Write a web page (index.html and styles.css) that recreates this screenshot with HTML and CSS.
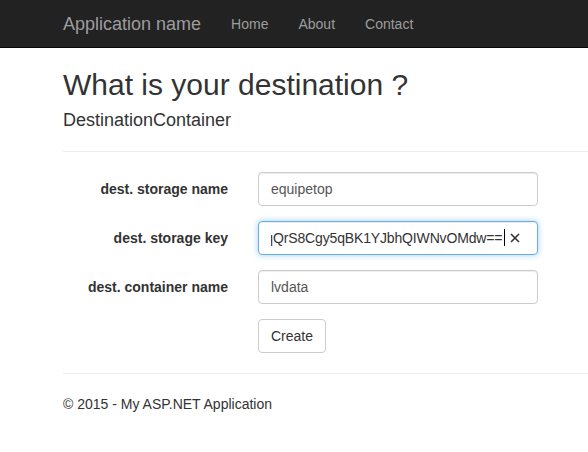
FILE: index.html
```html
<!DOCTYPE html>
<html>
<head>
<meta charset="utf-8">
<title>Create</title>
<link rel="stylesheet" href="styles.css">
</head>
<body>
<nav class="navbar">
  <div class="container nav-inner">
    <a class="brand" href="#">Application name</a>
    <ul class="nav">
      <li><a href="#">Home</a></li>
      <li><a href="#">About</a></li>
      <li><a href="#">Contact</a></li>
    </ul>
  </div>
</nav>
<main class="container">
  <h2 class="title">What is your destination ?</h2>
  <h4 class="subtitle">DestinationContainer</h4>
  <hr class="rule">
  <form class="form">
    <div class="form-group">
      <label class="control-label">dest. storage name</label>
      <input class="form-control" type="text" value="equipetop">
    </div>
    <div class="form-group">
      <label class="control-label">dest. storage key</label>
      <div class="form-control focused key-field">
        <span class="partial"><span>q</span></span>
        <span class="key-text">QrS8Cgy5qBK1YJbhQIWNvOMdw==</span>
        <span class="caret"></span>
        <svg class="clear" width="10" height="10" viewBox="0 0 10 10"><path d="M1 1L9 9M9 1L1 9" stroke="#333" stroke-width="1.6" fill="none"/></svg>
      </div>
    </div>
    <div class="form-group">
      <label class="control-label">dest. container name</label>
      <input class="form-control" type="text" value="lvdata">
    </div>
    <div class="form-group">
      <span></span>
      <div><button type="button" class="btn">Create</button></div>
    </div>
  </form>
  <hr class="rule">
  <footer class="footer">
    <p>&copy; 2015 - My ASP.NET Application</p>
  </footer>
</main>
</body>
</html>
```
FILE: styles.css
```css
* { box-sizing: border-box; }
html, body { margin: 0; padding: 0; }
body {
  font-family: "Liberation Sans", Arial, sans-serif;
  font-size: 14px;
  line-height: 20px;
  color: #333;
  background: #fff;
  overflow: hidden;
}
.container { padding-left: 63px; }
.navbar {
  background: #222;
  border-bottom: 1px solid #080808;
  height: 48px;
}
.nav-inner { display: flex; align-items: flex-start; }
.brand {
  font-size: 18px;
  line-height: 20px;
  padding: 14px 15px 14px 0;
  color: #9d9d9d;
  text-decoration: none;
}
.nav { list-style: none; margin: 0; padding: 0; display: flex; }
.nav a {
  display: block;
  padding: 14px 15px;
  line-height: 20px;
  color: #9d9d9d;
  text-decoration: none;
}
.title {
  font-size: 30px;
  line-height: 1.1;
  font-weight: 500;
  margin: 20px 0 10px;
}
.subtitle {
  font-size: 18px;
  line-height: 1.1;
  font-weight: 500;
  margin: 10px 0 10px;
}
.rule {
  border: 0;
  border-top: 1px solid #eee;
  margin: 20px 0;
  height: 0;
}
.form { margin: 0; }
.form-group {
  display: grid;
  grid-template-columns: 165px 280px;
  column-gap: 30px;
  margin-bottom: 15px;
}
.form-group:last-child { margin-bottom: 0; }
.control-label {
  text-align: right;
  font-weight: bold;
  padding-top: 7px;
  line-height: 20px;
}
.form-control {
  display: block;
  width: 280px;
  height: 34px;
  padding: 6px 12px;
  font-family: "Liberation Sans", Arial, sans-serif;
  font-size: 14px;
  line-height: 20px;
  color: #555;
  background: #fff;
  border: 1px solid #ccc;
  border-radius: 4px;
  box-shadow: inset 0 1px 1px rgba(0,0,0,.075);
  outline: none;
}
.focused {
  border-color: #66afe9;
  box-shadow: inset 0 1px 1px rgba(0,0,0,.075), 0 0 6px rgba(102,175,233,.6);
}
.key-field {
  display: flex;
  align-items: center;
  padding-right: 17px;
  color: #333;
  white-space: nowrap;
}
.partial {
  width: 2px;
  overflow: hidden;
  display: flex;
  justify-content: flex-end;
  flex: none;
}
.partial span { flex: none; }
.key-text {
  flex: none;
  letter-spacing: -0.15px;
}
.caret {
  width: 1px;
  height: 17px;
  background: #000;
  margin-left: 2px;
  flex: none;
}
.clear { margin-left: auto; flex: none; }
.btn {
  display: inline-block;
  height: 34px;
  padding: 6px 12px;
  font-family: "Liberation Sans", Arial, sans-serif;
  font-size: 14px;
  line-height: 20px;
  color: #333;
  background: #fff;
  border: 1px solid #ccc;
  border-radius: 4px;
  cursor: pointer;
}
.footer p { margin: 0; }
```
